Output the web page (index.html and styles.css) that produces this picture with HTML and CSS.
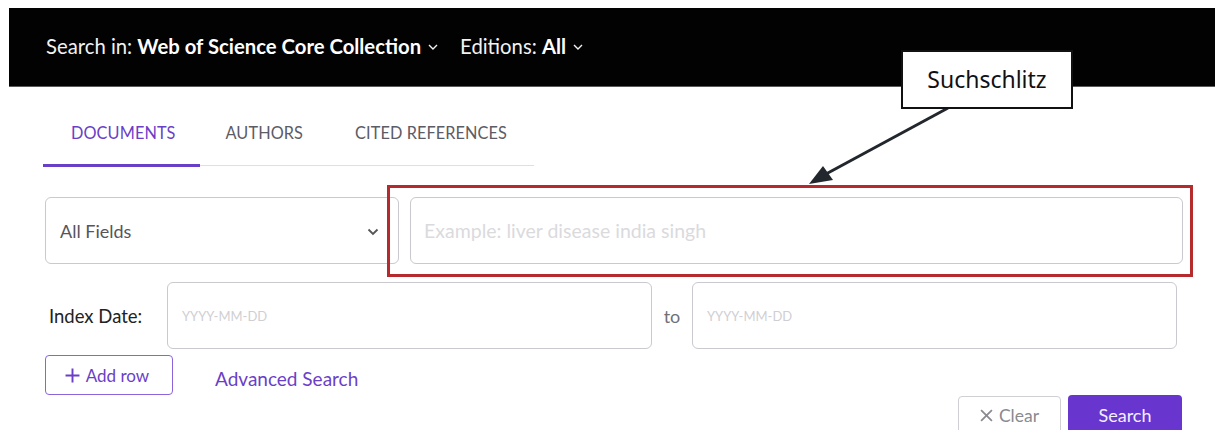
FILE: index.html
```html
<!DOCTYPE html>
<html lang="de">
<head>
<meta charset="utf-8">
<title>Web of Science – Suche</title>
<link rel="stylesheet" href="styles.css">
</head>
<body>
<div class="page">
  <header class="scope-bar">
    <span class="scope-item">Search in: <b>Web of Science Core Collection</b><svg class="caret" viewBox="0 0 10 6" width="10" height="6"><path d="M1 1l4 4 4-4" fill="none" stroke="currentColor" stroke-width="1.4"/></svg></span>
    <span class="scope-item">Editions: <b>All</b><svg class="caret" viewBox="0 0 10 6" width="10" height="6"><path d="M1 1l4 4 4-4" fill="none" stroke="currentColor" stroke-width="1.4"/></svg></span>
  </header>

  <main class="search-panel">
    <nav class="tabs">
      <a class="tab active">DOCUMENTS</a>
      <a class="tab">AUTHORS</a>
      <a class="tab">CITED REFERENCES</a>
    </nav>

    <div class="query-row">
      <div class="field-select">
        <span>All Fields</span>
        <svg class="select-caret" viewBox="0 0 12 8" width="12" height="8"><path d="M1.5 1.5l4.5 4.5 4.5-4.5" fill="none" stroke="#555" stroke-width="1.8"/></svg>
      </div>
      <div class="text-input query-input">Example: liver disease india singh</div>
    </div>

    <div class="date-row">
      <label class="date-label">Index Date:</label>
      <div class="text-input date-input">YYYY-MM-DD</div>
      <span class="date-to">to</span>
      <div class="text-input date-input">YYYY-MM-DD</div>
    </div>

    <div class="extra-row">
      <button class="btn-outline"><svg viewBox="0 0 14 14" width="15" height="15"><path d="M7 0.5v13M0.5 7h13" stroke="currentColor" stroke-width="1.8"/></svg>Add row</button>
      <a class="advanced-link">Advanced Search</a>
    </div>

    <div class="action-row">
      <button class="btn-clear"><svg viewBox="0 0 12 12" width="13" height="13"><path d="M1 1l10 10M11 1L1 11" stroke="currentColor" stroke-width="1.6"/></svg>Clear</button>
      <button class="btn-search">Search</button>
    </div>
  </main>

  <div class="highlight"></div>
  <svg class="pointer" width="1215" height="430" viewBox="0 0 1215 430">
    <line x1="948" y1="108" x2="826" y2="174" stroke="#22272e" stroke-width="3"/>
    <polygon points="809,184 823,166 833,180" fill="#22272e"/>
  </svg>
  <div class="callout">Suchschlitz</div>
</div>
</body>
</html>
```

FILE: styles.css
```css
* { box-sizing: border-box; }

html, body {
  margin: 0;
  padding: 0;
  background: #fff;
}

.page {
  position: relative;
  width: 1215px;
  height: 430px;
  overflow: hidden;
  padding-top: 8px;
  font-family: "Lato", "Noto Sans", sans-serif;
}

/* black scope bar */
.scope-bar {
  margin-left: 9px;
  height: 79px;
  background: #020202;
  border-bottom: 1px solid #5a5a5a;
  display: flex;
  align-items: center;
  gap: 22px;
  padding-left: 37px;
  padding-bottom: 2px;
  color: #f2f2f2;
  font-size: 20.3px;
}

.scope-item {
  display: flex;
  align-items: center;
  white-space: pre;
}

.scope-item b { font-weight: 700; color: #fff; }

.caret { margin-left: 7px; margin-top: 2px; }

/* search form */
.search-panel {
  padding-left: 45px;
}

.tabs {
  display: flex;
  width: 489px;
  margin-top: 14px;
  border-bottom: 1px solid #dedfe3;
  height: 65px;
}

.tab {
  padding: 0 26px;
  display: flex;
  align-items: center;
  font-size: 16.3px;
  color: #5c5c66;
  letter-spacing: 0.1px;
  border-bottom: 3px solid transparent;
  margin-bottom: -2px;
  padding-bottom: 0;
}

.tab.active {
  color: #6a3fc7;
  border-bottom-color: #6a3fc7;
  margin-left: -2px;
  padding-left: 28px;
  padding-right: 24px;
}

.query-row {
  display: flex;
  gap: 11px;
  margin-top: 31px;
  height: 67px;
}

.text-input,
.field-select {
  border: 1px solid #c9c9cf;
  border-radius: 6px;
  display: flex;
  align-items: center;
  background: #fff;
}

.field-select {
  width: 354px;
  justify-content: space-between;
  padding: 0 19px 0 14px;
  font-size: 18px;
  color: #55555c;
}

.select-caret { margin-top: 2px; }

.query-input {
  width: 773px;
  padding-left: 13px;
  font-size: 19.5px;
  color: #dadadd;
}

.date-row {
  display: flex;
  align-items: center;
  margin-top: 18px;
  height: 67px;
}

.date-label {
  width: 122px;
  padding-left: 4px;
  font-size: 18.5px;
  color: #222;
}

.date-input {
  width: 485px;
  height: 67px;
  padding-left: 14px;
  font-size: 13px;
  color: #cfcfd3;
}

.date-to {
  width: 40px;
  text-align: center;
  font-size: 18px;
  color: #707078;
}

.extra-row {
  display: flex;
  align-items: center;
  gap: 42px;
  margin-top: 6px;
  height: 40px;
}

.btn-outline {
  width: 128px;
  height: 40px;
  border: 1px solid #8b63db;
  border-radius: 4px;
  background: #fff;
  color: #6a3fc7;
  font-family: inherit;
  font-size: 17px;
  display: flex;
  align-items: center;
  justify-content: center;
  gap: 6px;
  padding: 0 4px 0 0;
}

.advanced-link {
  font-size: 19px;
  color: #6a3fc7;
  margin-top: 7px;
}

.action-row {
  display: flex;
  justify-content: flex-end;
  gap: 7px;
  width: 1137px;
  margin-top: 0;
}

.btn-clear,
.btn-search {
  height: 42px;
  border-radius: 4px;
  font-family: inherit;
  font-size: 17.5px;
  display: flex;
  align-items: center;
  justify-content: center;
  padding: 0 0 3px;
}

.btn-clear {
  width: 103px;
  margin-top: 1px;
  border: 1px solid #cfcfd4;
  background: #fff;
  color: #8a8a90;
  gap: 6px;
}

.btn-search {
  width: 114px;
  border: none;
  background: #6935cf;
  color: #f3efff;
  font-size: 18px;
}

/* annotation overlay */
.highlight {
  position: absolute;
  left: 387px;
  top: 185px;
  width: 806px;
  height: 92px;
  border: 3px solid #b52b2d;
}

.pointer {
  position: absolute;
  left: 0;
  top: 0;
}

.callout {
  position: absolute;
  left: 901px;
  top: 50px;
  width: 172px;
  height: 59px;
  background: #fff;
  border: 2px solid #111;
  display: flex;
  align-items: center;
  justify-content: center;
  font-family: "Noto Sans", sans-serif;
  font-weight: 400;
  font-size: 23px;
  color: #111;
  padding-bottom: 2px;
}
```
